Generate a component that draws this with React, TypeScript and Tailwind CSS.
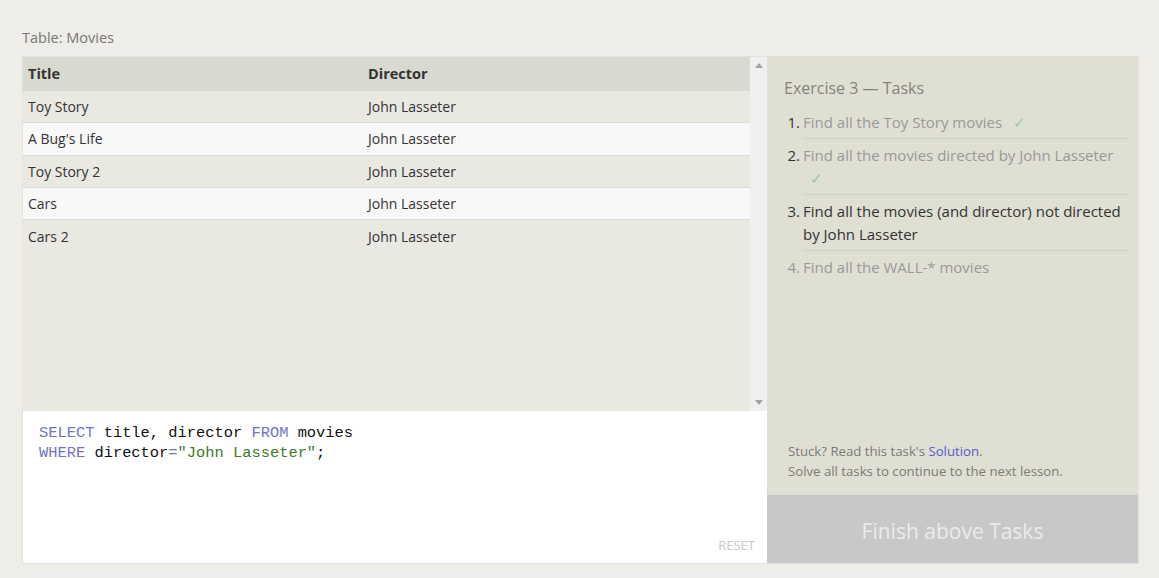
import React from "react";

const movies = [
  { title: "Toy Story", director: "John Lasseter" },
  { title: "A Bug's Life", director: "John Lasseter" },
  { title: "Toy Story 2", director: "John Lasseter" },
  { title: "Cars", director: "John Lasseter" },
  { title: "Cars 2", director: "John Lasseter" },
];

const tasks = [
  { text: "Find all the Toy Story movies", done: true, current: false },
  { text: "Find all the movies directed by John Lasseter", done: true, current: false },
  { text: "Find all the movies (and director) not directed by John Lasseter", done: false, current: true },
  { text: "Find all the WALL-* movies", done: false, current: false },
];

export default function App() {
  return (
    <div
      className="w-[1159px] h-[578px] bg-[#efede7] px-[22px] pt-[28px] text-[#333]"
      style={{ fontFamily: '"Open Sans", "Noto Sans", sans-serif' }}
    >
      <div className="text-[14.5px] leading-[20px] text-[#777] mb-[8px]">Table: Movies</div>

      <div className="flex w-[1117px] h-[508px] border border-[#e4e2da]">
        {/* LEFT: table + editor */}
        <div className="flex flex-col w-[744px]">
          <div className="flex h-[354px] bg-[#e9e8e1]">
            <div className="flex-1 flex flex-col">
              <div className="flex h-[34px] items-center bg-[#d8d9cf] font-bold text-[14.5px]">
                <div className="w-[340px] pl-[5px]">Title</div>
                <div className="flex-1 pl-[5px]">Director</div>
              </div>
              {movies.map((m, i) => (
                <div
                  key={m.title}
                  className={
                    "flex h-[32.25px] items-center text-[14px] " +
                    (i < movies.length - 1 ? "border-b border-[#dcdcd6] " : "") +
                    (i % 2 === 0 ? "bg-[#e9e8e1]" : "bg-[#f8f8f8]")
                  }
                >
                  <div className="w-[340px] pl-[5px]">{m.title}</div>
                  <div className="flex-1 pl-[5px]">{m.director}</div>
                </div>
              ))}
            </div>
            {/* scrollbar */}
            <div className="w-[17px] bg-[#f0f0f0] flex flex-col justify-between items-center py-[6px]">
              <svg width="8" height="5" viewBox="0 0 8 5">
                <path d="M0 5 L4 0 L8 5 Z" fill="#a3a3a3" />
              </svg>
              <svg width="8" height="5" viewBox="0 0 8 5">
                <path d="M0 0 L4 5 L8 0 Z" fill="#a3a3a3" />
              </svg>
            </div>
          </div>

          {/* editor */}
          <div className="flex-1 bg-white relative pt-[12px] pl-[16px]">
            <pre
              className="text-[15.4px] leading-[20px] text-[#111]"
              style={{ fontFamily: '"Liberation Mono", "DejaVu Sans Mono", monospace' }}
            >
              <span className="text-[#7272c4]">SELECT</span> title, director <span className="text-[#7272c4]">FROM</span> movies
              {"\n"}
              <span className="text-[#7272c4]">WHERE</span> director<span className="text-[#7272c4]">=</span>
              <span className="text-[#3d7a28]">"John Lasseter"</span>;
            </pre>
            <div className="absolute right-[12px] bottom-[8px] text-[13px] text-[#c8c8c8]">RESET</div>
          </div>
        </div>

        {/* RIGHT: tasks */}
        <div className="flex flex-col flex-1">
          <div className="flex-1 bg-[#e0dfd4] flex flex-col pl-[17px] pr-[8px] pt-[19px]">
            <div className="text-[16px] leading-[24px] text-[#84847d]">Exercise 3 — Tasks</div>
            <ol className="mt-[6px] text-[15px] leading-[23px]">
              {tasks.map((t, i) => (
                <li key={i} className="flex">
                  <span
                    className={
                      "w-[19px] shrink-0 text-right pr-[3px] py-[4.5px] " +
                      (t.done || t.current ? "text-[#333]" : "text-[#999]")
                    }
                  >
                    {i + 1}.
                  </span>
                  <div
                    className={
                      "flex-1 py-[4.5px] " +
                      (i < tasks.length - 1 ? "border-b border-[#d3d2c7] " : "") +
                      (t.current ? "text-[#333]" : "text-[#999]")
                    }
                  >
                    {t.text}
                    {t.done && (
                      <>
                        {" "}
                        <span className="inline-block text-[#9ccc9c] ml-[7px]">✓</span>
                      </>
                    )}
                  </div>
                </li>
              ))}
            </ol>
            <div className="mt-auto pb-[14px] pl-[4px] text-[13.2px] leading-[20px] text-[#7b7b76]">
              <div>
                Stuck? Read this task's <span className="text-[#5858d0]">Solution</span>.
              </div>
              <div>Solve all tasks to continue to the next lesson.</div>
            </div>
          </div>
          <div className="h-[68px] bg-[#c8c8c8] flex items-center justify-center pt-[5px] text-[21px] text-[#ebebeb]">
            Finish above Tasks
          </div>
        </div>
      </div>
    </div>
  );
}
